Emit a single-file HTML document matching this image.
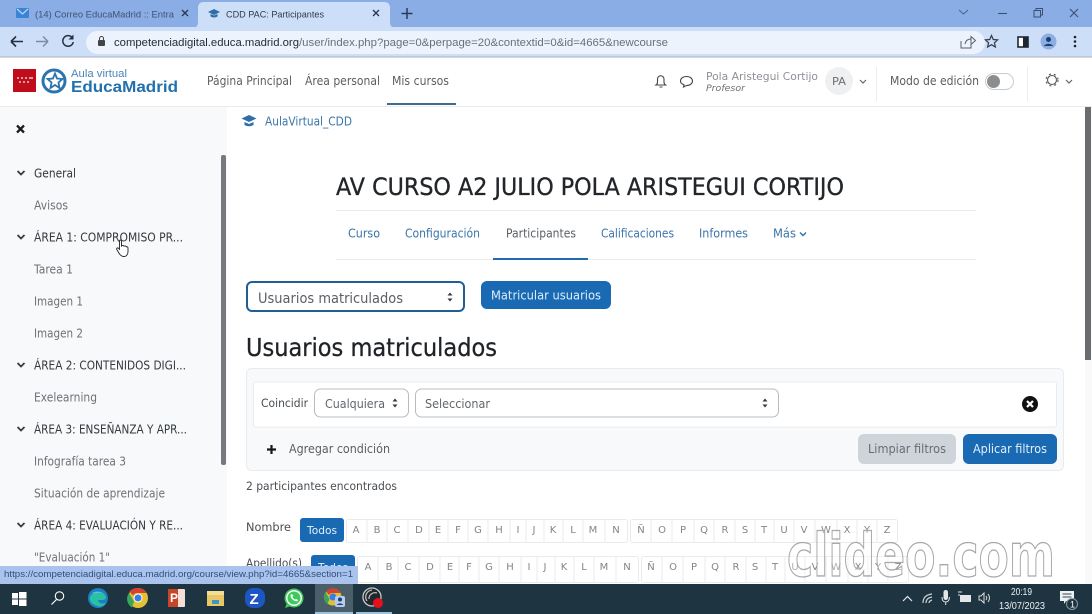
<!DOCTYPE html>
<html><head><meta charset="utf-8"><title>CDD PAC: Participantes</title>
<style>
html,body{margin:0;padding:0;background:#fff;overflow:hidden}
svg{display:block;filter:blur(.3px)}
text{font-family:"DejaVu Sans","Liberation Sans",sans-serif;white-space:pre}
.s{font-family:"Liberation Sans",sans-serif}
.n{font-size:12px;fill:#5a5f64}
.d{font-size:12px;fill:#33383d}
.g{font-size:12px;fill:#6d7278}
.t{font-size:12px;fill:#3a75a9}
.l{font-size:10px;fill:#80858a;text-anchor:middle}
</style></head><body>
<svg width="1092" height="614" viewBox="0 0 1092 614" xmlns="http://www.w3.org/2000/svg">
<rect width="1092" height="614" fill="#fff"/>
<!-- tab strip -->
<rect width="1092" height="28" fill="#8aade6"/>
<path d="M192 28q6 0 6-6V8q0-6 6-6h180q6 0 6 6v14q0 6 6 6z" fill="#cddff8"/>
<rect y="27" width="1092" height="30" fill="#cddff8"/>
<rect y="56.500" width="1092" height="1" fill="#a9b1bc"/>
<rect x="16" y="8" width="13" height="10" rx="1" fill="#3a84d6"/><path d="M17 9l5.500 5 5.500-5" fill="none" stroke="#bcd6f5" stroke-width="1.200"/>
<text class="s" x="35" y="17.500" font-size="9.500" fill="#3f5272" textLength="139" lengthAdjust="spacingAndGlyphs">(14) Correo EducaMadrid :: Entra</text>
<path d="M182 10l6 6M188 10l-6 6M373 10l6 6M379 10l-6 6" stroke="#2b3a52" stroke-width="1.400"/>
<path d="M208 12l6-3 6 3-6 3zM210.500 14v2.500q3.500 2 7 0V14l-3.500 1.500z" fill="#2f6ea6"/>
<text class="s" x="226" y="17.500" font-size="9.500" fill="#2d3a4c" textLength="98" lengthAdjust="spacingAndGlyphs">CDD PAC: Participantes</text>
<path d="M407 8v11M401.500 13.500h11" stroke="#2b3a52" stroke-width="1.500"/>
<path d="M959 10l4.500 4 4.500-4" fill="none" stroke="#4e6690" stroke-width="1.100"/>
<path d="M998 13.500h9" stroke="#3d5070" stroke-width="1.100"/>
<path d="M1034 10.500h6.500v6.500h-6.500zM1036 10.500V8.500h6.500V15h-2" fill="none" stroke="#3d5070" stroke-width="1"/>
<path d="M1070 9l8 8M1078 9l-8 8" stroke="#3d5070" stroke-width="1.100"/>
<!-- toolbar -->
<path d="M11 41.500h12M11 41.500l5-5M11 41.500l5 5" fill="none" stroke="#26303c" stroke-width="1.600"/>
<path d="M48 41.500H36M48 41.500l-5-5M48 41.500l-5 5" fill="none" stroke="#7f8da1" stroke-width="1.500"/>
<path d="M72.500 38a5.300 5.300 0 1 0 .8 4" fill="none" stroke="#26303c" stroke-width="1.500"/><path d="M73.500 34.500v5h-5z" fill="#26303c"/>
<rect x="86" y="31" width="375" height="23" rx="11.500" fill="#edf3fc"/>
<rect x="300" y="31" width="685" height="23" rx="11.500" fill="#edf3fc"/>
<rect x="98" y="40" width="7" height="6" rx="1" fill="#444"/><path d="M99.500 40v-1.500a2 2 0 0 1 4 0V40" fill="none" stroke="#444"/>
<text class="s" x="114" y="46" font-size="11" fill="#222c38" textLength="185" lengthAdjust="spacingAndGlyphs">competenciadigital.educa.madrid.org</text>
<text class="s" x="299" y="46" font-size="11" fill="#65707e" textLength="369" lengthAdjust="spacingAndGlyphs">/user/index.php?page=0&amp;perpage=20&amp;contextid=0&amp;id=4665&amp;newcourse</text>
<path d="M961 41v7h10v-3M965 44q1-5 6-5v-2.500l4.500 4-4.500 4V39" fill="none" stroke="#555f6c" stroke-width="1"/>
<path d="M991.500 35.500l1.800 4 4.300.4-3.200 2.900 1 4.200-3.900-2.300-3.900 2.300 1-4.200-3.200-2.900 4.300-.4z" fill="none" stroke="#333b47" stroke-width="1.200"/>
<rect x="1018" y="37" width="10" height="10" fill="#fff" stroke="#1d2733" stroke-width="1.600"/><rect x="1023" y="37" width="5" height="10" fill="#1d2733"/>
<circle cx="1048.500" cy="41.500" r="8" fill="#8eaee0"/><circle cx="1048.500" cy="39.500" r="2.500" fill="#1a3f78"/><path d="M1043.500 46q5-4.500 10 0z" fill="#1a3f78"/>
<circle cx="1075" cy="37" r="1.300" fill="#222"/><circle cx="1075" cy="41.500" r="1.300" fill="#222"/><circle cx="1075" cy="46" r="1.300" fill="#222"/>
<!-- header -->
<rect x="13" y="69" width="23" height="23" fill="#c00d1c"/>
<g fill="#fff"><circle cx="18" cy="78" r=".9"/><circle cx="22" cy="78" r=".9"/><circle cx="26" cy="78" r=".9"/><circle cx="30" cy="78" r=".9"/><circle cx="20" cy="82" r=".9"/><circle cx="24" cy="82" r=".9"/><circle cx="28" cy="82" r=".9"/><circle cx="32" cy="78" r=".9"/></g>
<circle cx="54" cy="81" r="11" fill="none" stroke="#2c74ae" stroke-width="3"/>
<path d="M55 73.500l2 5 5.500.5-4 3.500 1 5.500-4.500-3-4.500 3 1-5.500-4-3.500 5.500-.5z" fill="none" stroke="#2c74ae" stroke-width="1.800"/>
<text class="s" x="71" y="77" font-size="11" fill="#4b85ba" textLength="56" lengthAdjust="spacingAndGlyphs">Aula virtual</text>
<text class="s" x="71" y="92" font-size="15.500" font-weight="700" fill="#2270ae" textLength="107" lengthAdjust="spacingAndGlyphs">EducaMadrid</text>
<text class="n" x="207" y="85" textLength="85" lengthAdjust="spacingAndGlyphs">Página Principal</text>
<text class="n" x="305" y="85" textLength="75" lengthAdjust="spacingAndGlyphs">Área personal</text>
<text class="n" x="392" y="85" textLength="57" lengthAdjust="spacingAndGlyphs">Mis cursos</text>
<rect x="387" y="103" width="69" height="2" fill="#3f6a90"/>
<rect y="106" width="1092" height="1" fill="#e8eaec"/>
<path d="M656 85q1.500-1 1.500-3v-3a3.200 3.200 0 0 1 6.500 0v3q0 2 1.500 3zM659.500 87h3" fill="none" stroke="#40464c" stroke-width="1.100"/>
<path d="M686.500 76.500c3.500 0 6 2 6 4.500s-2.500 4.500-6 4.500l-3 1.500.5-2.200c-2-.8-3.500-2.200-3.500-3.800 0-2.500 2.500-4.500 6-4.500z" fill="none" stroke="#40464c" stroke-width="1.100"/>
<text x="706" y="80" font-size="11" fill="#8c9095" textLength="112" lengthAdjust="spacingAndGlyphs">Pola Aristegui Cortijo</text>
<text x="706" y="91" font-size="9" font-style="italic" fill="#6c7075" textLength="39" lengthAdjust="spacingAndGlyphs">Profesor</text>
<circle cx="839" cy="81" r="14" fill="#eef0f1"/>
<text x="832" y="85" font-size="11" fill="#6c7075" textLength="14" lengthAdjust="spacingAndGlyphs">PA</text>
<path d="M860 80l3 3 3-3M1066 80l3 3 3-3" fill="none" stroke="#666" stroke-width="1.200"/>
<rect x="876" y="67" width="1" height="34" fill="#eceded"/><rect x="1027" y="67" width="1" height="34" fill="#eceded"/>
<text class="n" x="890" y="85" textLength="89" lengthAdjust="spacingAndGlyphs">Modo de edición</text>
<rect x="985.500" y="73.500" width="28" height="16" rx="8" fill="#fff" stroke="#c9cccf"/>
<circle cx="993.500" cy="81.500" r="6.500" fill="#8b8e91"/>
<circle cx="1052" cy="80" r="4.500" fill="none" stroke="#555" stroke-width="1.100"/>
<circle cx="1052" cy="80" r="6" fill="none" stroke="#555" stroke-width="1.100" stroke-dasharray="2 3"/>
<!-- sidebar -->
<rect y="107" width="227" height="460" fill="#f8f9fa"/>
<path d="M17 125.500l7 7M24 125.500l-7 7" stroke="#1a1d20" stroke-width="2.300"/>
<rect x="221" y="155" width="5" height="310" rx="2" fill="#767a7e"/>
<g fill="none" stroke="#33383d" stroke-width="1.700">
<path d="M17.500 171l3.500 3.500 3.500-3.500M17.500 235l3.500 3.500 3.500-3.500M17.500 363l3.500 3.500 3.500-3.500M17.500 427l3.500 3.500 3.500-3.500M17.500 523l3.500 3.500 3.500-3.500"/></g>
<text class="d" x="34" y="177.500" textLength="42" lengthAdjust="spacingAndGlyphs">General</text>
<text class="g" x="34" y="209.500" textLength="34" lengthAdjust="spacingAndGlyphs">Avisos</text>
<text class="d" x="34" y="241.500" textLength="149" lengthAdjust="spacingAndGlyphs">ÁREA 1: COMPROMISO PR...</text>
<text class="g" x="34" y="273.500" textLength="39" lengthAdjust="spacingAndGlyphs">Tarea 1</text>
<text class="g" x="34" y="305.500" textLength="49" lengthAdjust="spacingAndGlyphs">Imagen 1</text>
<text class="g" x="34" y="337.500" textLength="49" lengthAdjust="spacingAndGlyphs">Imagen 2</text>
<text class="d" x="34" y="369.500" textLength="152" lengthAdjust="spacingAndGlyphs">ÁREA 2: CONTENIDOS DIGI...</text>
<text class="g" x="34" y="401.500" textLength="63" lengthAdjust="spacingAndGlyphs">Exelearning</text>
<text class="d" x="34" y="433.500" textLength="153" lengthAdjust="spacingAndGlyphs">ÁREA 3: ENSEÑANZA Y APR...</text>
<text class="g" x="34" y="465.500" textLength="92" lengthAdjust="spacingAndGlyphs">Infografía tarea 3</text>
<text class="g" x="34" y="497.500" textLength="131" lengthAdjust="spacingAndGlyphs">Situación de aprendizaje</text>
<text class="d" x="34" y="529.500" textLength="149" lengthAdjust="spacingAndGlyphs">ÁREA 4: EVALUACIÓN Y RE...</text>
<text class="g" x="34" y="561.500" textLength="76" lengthAdjust="spacingAndGlyphs">"Evaluación 1"</text>
<path d="M119.500 240.500c1-.8 2-.3 2 1v4.500c1-1 2-.5 2.500.2 1-.5 2-.2 2.300.6 1-.3 1.700.3 1.700 1.300v3.500c0 2.500-1.500 4.900-4 4.900-2.500 0-3.800-1.400-4.800-3l-2.400-4c-.6-1.200.8-2.300 1.700-1.200l1 1z" fill="#fff" stroke="#222" stroke-width=".9"/>
<!-- breadcrumbs -->
<path d="M241.500 118.500l7.500-3.500 7.500 3.500-7.500 3.500zM244.500 122v3q4.500 2.500 9 0v-3l-4.500 2z" fill="#2f6ea6"/>
<text class="t" x="265" y="125.500" textLength="87" lengthAdjust="spacingAndGlyphs">AulaVirtual_CDD</text>
<!-- title -->
<text x="336" y="195" font-size="24" fill="#22262a" stroke="#22262a" stroke-width=".35" textLength="508" lengthAdjust="spacingAndGlyphs">AV CURSO A2 JULIO POLA ARISTEGUI CORTIJO</text>
<rect x="336" y="210" width="640" height="1" fill="#e9ebed"/>
<rect x="336" y="259" width="640" height="1" fill="#e9ebed"/>
<text class="t" x="348" y="237.500" textLength="32" lengthAdjust="spacingAndGlyphs">Curso</text>
<text class="t" x="405" y="237.500" textLength="75" lengthAdjust="spacingAndGlyphs">Configuración</text>
<text class="n" x="506" y="237.500" textLength="70" lengthAdjust="spacingAndGlyphs">Participantes</text>
<text class="t" x="601" y="237.500" textLength="73" lengthAdjust="spacingAndGlyphs">Calificaciones</text>
<text class="t" x="699" y="237.500" textLength="49" lengthAdjust="spacingAndGlyphs">Informes</text>
<text class="t" x="773" y="237.500" textLength="23" lengthAdjust="spacingAndGlyphs">Más</text>
<path d="M800 232.500l3 3 3-3" fill="none" stroke="#2f6ea6" stroke-width="1.400"/>
<rect x="493" y="258" width="95" height="2" fill="#1f6cb0"/>
<!-- select and button -->
<rect x="247" y="282" width="217" height="29" rx="5" fill="#fff" stroke="#1f5f96" stroke-width="2"/>
<text x="258" y="303" font-size="14" fill="#5a5f64" textLength="145" lengthAdjust="spacingAndGlyphs">Usuarios matriculados</text>
<path d="M447.500 295.500l2.500-3 2.500 3zM447.500 298.500l2.500 3 2.500-3z" fill="#33383d"/>
<rect x="481" y="281" width="130" height="28" rx="6" fill="#1a69b3"/>
<text x="491" y="299.500" font-size="12" fill="#dcedfb" textLength="110" lengthAdjust="spacingAndGlyphs">Matricular usuarios</text>
<text x="246" y="356" font-size="25" fill="#1f2327" stroke="#1f2327" stroke-width=".3" textLength="251" lengthAdjust="spacingAndGlyphs">Usuarios matriculados</text>
<!-- filters -->
<rect x="246.500" y="368.500" width="817" height="102" rx="5" fill="#f8f9fa" stroke="#e9ecef"/>
<rect x="253.500" y="382" width="803" height="45" rx="2" fill="#fff" stroke="#e9ecef"/>
<text x="261" y="407" font-size="11.500" fill="#494e53" textLength="47" lengthAdjust="spacingAndGlyphs">Coincidir</text>
<rect x="314.500" y="389" width="94" height="28" rx="6" fill="#fff" stroke="#b8bcc0"/>
<text x="325" y="408" font-size="12" fill="#62676c" textLength="60" lengthAdjust="spacingAndGlyphs">Cualquiera</text>
<path d="M392.500 401.500l2.500-3 2.500 3zM392.500 404.500l2.500 3 2.500-3z" fill="#33383d"/>
<rect x="415.500" y="389" width="363" height="28" rx="6" fill="#fff" stroke="#b8bcc0"/>
<text x="425" y="408" font-size="12" fill="#62676c" textLength="65" lengthAdjust="spacingAndGlyphs">Seleccionar</text>
<path d="M762.500 401.500l2.500-3 2.500 3zM762.500 404.500l2.500 3 2.500-3z" fill="#33383d"/>
<circle cx="1030" cy="404" r="8" fill="#111"/>
<path d="M1027 401l6 6M1033 401l-6 6" stroke="#fff" stroke-width="2.200"/>
<path d="M271.500 445v9M267 449.500h9" stroke="#17191c" stroke-width="2.200"/>
<text x="289" y="453" font-size="12" fill="#5a5f64" textLength="101" lengthAdjust="spacingAndGlyphs">Agregar condición</text>
<rect x="858" y="434" width="98" height="30" rx="6" fill="#ced4da"/>
<text x="868" y="453" font-size="12" fill="#686d72" textLength="78" lengthAdjust="spacingAndGlyphs">Limpiar filtros</text>
<rect x="963" y="434" width="94" height="30" rx="6" fill="#1a69b3"/>
<text x="973" y="453" font-size="12" fill="#e3f0fb" textLength="74" lengthAdjust="spacingAndGlyphs">Aplicar filtros</text>
<text x="246" y="490" font-size="11.500" fill="#494e53" textLength="151" lengthAdjust="spacingAndGlyphs">2 participantes encontrados</text>
<!-- initials -->
<text x="246" y="531" font-size="11.500" fill="#494e53" textLength="45" lengthAdjust="spacingAndGlyphs">Nombre</text>
<rect x="300" y="518" width="44" height="24" rx="3" fill="#1a69b3"/>
<text x="307" y="534" font-size="11" fill="#e3f0fb" textLength="30" lengthAdjust="spacingAndGlyphs">Todos</text>
<g fill="none" stroke="#e9ebed">
<rect x="346.500" y="519.500" width="281" height="23" rx="2"/><rect x="630.500" y="519.500" width="267" height="23" rx="2"/>
<path d="M367 519v24M387 519v24M408 519v24M429 519v24M448 519v24M468 519v24M488 519v24M510 519v24M526 519v24M544 519v24M563 519v24M583 519v24M605 519v24M651 519v24M672 519v24M694 519v24M714 519v24M735 519v24M755 519v24M774 519v24M794 519v24M815 519v24M837 519v24M857 519v24M877 519v24"/>
<rect x="357.500" y="556.500" width="281" height="26" rx="2"/><rect x="641.500" y="556.500" width="267" height="26" rx="2"/>
<path d="M378 556v27M398 556v27M419 556v27M440 556v27M459 556v27M479 556v27M499 556v27M521 556v27M537 556v27M555 556v27M574 556v27M594 556v27M616 556v27M662 556v27M683 556v27M705 556v27M725 556v27M746 556v27M766 556v27M785 556v27M805 556v27M826 556v27M848 556v27M868 556v27M888 556v27"/></g>
<text class="l" x="356" y="533">A</text><text class="l" x="377" y="533">B</text><text class="l" x="397" y="533">C</text><text class="l" x="419" y="533">D</text><text class="l" x="438" y="533">E</text><text class="l" x="458" y="533">F</text><text class="l" x="478" y="533">G</text><text class="l" x="499" y="533">H</text><text class="l" x="518" y="533">I</text><text class="l" x="534" y="533">J</text><text class="l" x="553" y="533">K</text><text class="l" x="573" y="533">L</text><text class="l" x="593" y="533">M</text><text class="l" x="616" y="533">N</text><text class="l" x="641" y="533">Ñ</text><text class="l" x="662" y="533">O</text><text class="l" x="683" y="533">P</text><text class="l" x="704" y="533">Q</text><text class="l" x="725" y="533">R</text><text class="l" x="745" y="533">S</text><text class="l" x="764" y="533">T</text><text class="l" x="784" y="533">U</text><text class="l" x="804" y="533">V</text><text class="l" x="826" y="533">W</text><text class="l" x="847" y="533">X</text><text class="l" x="867" y="533">Y</text><text class="l" x="887" y="533">Z</text>
<text x="246" y="567" font-size="11.500" fill="#494e53" textLength="56" lengthAdjust="spacingAndGlyphs">Apellido(s)</text>
<rect x="311" y="555" width="44" height="28" rx="3" fill="#1a69b3"/>
<text x="318" y="571" font-size="11" fill="#e3f0fb" textLength="30" lengthAdjust="spacingAndGlyphs">Todos</text>
<text class="l" x="368" y="570">A</text><text class="l" x="389" y="570">B</text><text class="l" x="408" y="570">C</text><text class="l" x="430" y="570">D</text><text class="l" x="450" y="570">E</text><text class="l" x="469" y="570">F</text><text class="l" x="489" y="570">G</text><text class="l" x="510" y="570">H</text><text class="l" x="529" y="570">I</text><text class="l" x="545" y="570">J</text><text class="l" x="564" y="570">K</text><text class="l" x="584" y="570">L</text><text class="l" x="604" y="570">M</text><text class="l" x="627" y="570">N</text><text class="l" x="651" y="570">Ñ</text><text class="l" x="673" y="570">O</text><text class="l" x="694" y="570">P</text><text class="l" x="715" y="570">Q</text><text class="l" x="736" y="570">R</text><text class="l" x="755" y="570">S</text><text class="l" x="775" y="570">T</text><text class="l" x="795" y="570">U</text><text class="l" x="815" y="570">V</text><text class="l" x="836" y="570">W</text><text class="l" x="858" y="570">X</text><text class="l" x="878" y="570">Y</text><text class="l" x="898" y="570">Z</text>
<!-- main scrollbar -->
<rect x="1085" y="107" width="7" height="477" fill="#f9f9f9"/>
<rect x="1085" y="107" width="6" height="253" fill="#6a6d70"/>
<!-- watermark -->
<text x="787" y="576" font-size="60" font-weight="700" fill="#fff" fill-opacity=".35" stroke="#a8a8a8" stroke-width="1.300" textLength="268" lengthAdjust="spacingAndGlyphs">clideo.com</text>
<!-- status bubble -->
<rect y="566" width="358" height="18" fill="#a9c3ec"/>
<text class="s" x="4" y="577" font-size="9.500" fill="#2f4f7d" textLength="349" lengthAdjust="spacingAndGlyphs">https://competenciadigital.educa.madrid.org/course/view.php?id=4665&amp;section=1</text>
<!-- taskbar -->
<rect y="584" width="1092" height="30" fill="#1e3440"/>
<g fill="#fff"><rect x="12" y="593" width="6" height="5.500"/><rect x="19" y="592" width="7.500" height="6.500"/><rect x="12" y="599.500" width="6" height="5.500"/><rect x="19" y="599.500" width="7.500" height="6.500"/></g>
<circle cx="59.500" cy="596" r="4.200" fill="none" stroke="#fff" stroke-width="1.100"/><path d="M56.500 599.500l-5 5" stroke="#fff" stroke-width="1.200"/>
<circle cx="98" cy="598" r="10" fill="#1b7fc4"/><path d="M90 600a8 6 0 0 1 16-3q0 3-4 3h-4q1 5 8 3-4 5-9 3-6-2-7-6z" fill="#29c0a3"/><path d="M92 593a9 7 0 0 1 14 3q-3-4-8-3t-6 0z" fill="#8ed1f0" opacity=".6"/>
<circle cx="138" cy="598" r="10" fill="#e2c134"/><path d="M138 588a10 10 0 0 1 8.700 5H138a5 5 0 0 0-5 2.500l-3.500-4a10 10 0 0 1 8.500-3.500z" fill="#d8412f"/><path d="M129 593l5 8.500 -2 6a10 10 0 0 1-3-14.500z" fill="#3ba55c"/><circle cx="138" cy="598" r="4.500" fill="#fff"/><circle cx="138" cy="598" r="3.500" fill="#3a7de0"/>
<rect x="168" y="589" width="17" height="18" rx="1" fill="#f3dfd6"/><rect x="168" y="589" width="10" height="18" fill="#c8452a"/>
<text class="s" x="170" y="602" font-size="12" font-weight="700" fill="#fff">P</text>
<rect x="207" y="591" width="17" height="15" fill="#e8c766"/><rect x="207" y="591" width="17" height="4" fill="#f3dd92"/><rect x="212" y="600" width="7" height="4" fill="#3f93c9"/>
<rect x="245" y="588" width="20" height="20" rx="8" fill="#1d55c4"/>
<text class="s" x="249.500" y="604" font-size="15" font-weight="700" fill="#fff">Z</text>
<circle cx="294" cy="598" r="9.500" fill="#3ec95a"/><path d="M285 608l2-5 4 3z" fill="#3ec95a"/><circle cx="294" cy="598" r="7.200" fill="none" stroke="#fff" stroke-width="1.400"/><path d="M291 594q-1.500 3 1.500 5.500t5.500 1.500l-1-2-2 .5q-2-1-2.500-3l1-1.200z" fill="#fff"/>
<rect x="315" y="584" width="38" height="30" fill="#4b5f6a"/>
<rect x="315" y="612" width="38" height="2" fill="#9cc2dd"/><rect x="356" y="612" width="36" height="2" fill="#9cc2dd"/>
<circle cx="333" cy="597" r="8.500" fill="#dcc13b"/><path d="M333 588.500a8.500 8.500 0 0 1 7.500 4.500H333a4 4 0 0 0-4 2l-3-3.500a8.500 8.500 0 0 1 7-3z" fill="#d8412f"/><path d="M325.500 592l4 7-2 5a8.500 8.500 0 0 1-2-12z" fill="#3ba55c"/>
<circle cx="333" cy="597" r="3.500" fill="#3a7de0"/>
<rect x="335" y="596" width="10" height="11" rx="2" fill="#b8cdec"/><circle cx="340" cy="599.500" r="2" fill="#1a3f78"/><path d="M336.500 605q3.500-3.500 7 0z" fill="#1a3f78"/>
<circle cx="372" cy="597" r="9" fill="#20262b" stroke="#c9c9c9" stroke-width="1.300"/>
<path d="M372 590a7 7 0 0 0-5 11M369 599a6 6 0 0 1 8-6" fill="none" stroke="#bbb" stroke-width="1.300"/>
<circle cx="378" cy="603" r="5" fill="#e3111d"/>
<path d="M903 601l4.500-4.500 4.500 4.500" fill="none" stroke="#e6e9eb" stroke-width="1.200"/>
<path d="M923 603q0-8 9-9M926 603q0-5 6-6M929 603q0-2 3-3" fill="none" stroke="#c9ced2" stroke-width="1.200"/>
<rect x="943.500" y="590" width="4.500" height="10" rx="2.200" fill="#e3e6e8"/><path d="M942 597q0 5 3.700 5t3.700-5M945.700 602v3" fill="none" stroke="#e3e6e8"/>
<rect x="960" y="595" width="11" height="7" fill="#e3e6e8"/><path d="M958 592h4M958 595h2" stroke="#e3e6e8"/>
<path d="M979 596h2l3-3v10l-3-3h-2zM986 596q1.500 2 0 4M988 594q3 4 0 8" fill="none" stroke="#d8dcdf" stroke-width="1"/>
<text class="s" x="1011" y="595" font-size="10" fill="#eef1f3" textLength="21" lengthAdjust="spacingAndGlyphs">20:19</text>
<text class="s" x="999" y="609" font-size="10" fill="#eef1f3" textLength="46" lengthAdjust="spacingAndGlyphs">13/07/2023</text>
<path d="M1060 591h14v10h-8l-2 3v-3h-4z" fill="#eef1f3"/><path d="M1062.500 594h9M1062.500 597h9" stroke="#33495a"/>
<circle cx="1072" cy="604" r="5.500" fill="#1e3440" stroke="#8a98a2"/>
<text class="s" x="1070" y="607.500" font-size="9" fill="#fff">1</text>
</svg>
</body></html>
